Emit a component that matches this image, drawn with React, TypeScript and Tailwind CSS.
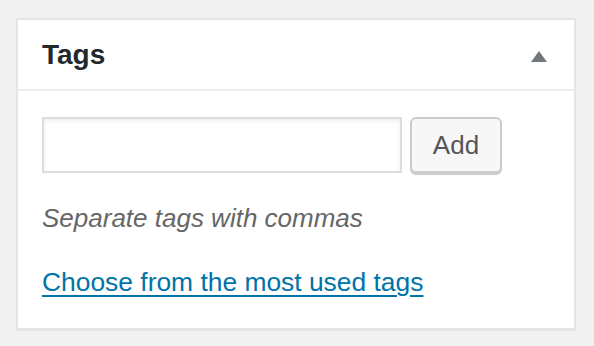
import React from 'react';

const font = { fontFamily: '"Liberation Sans", Arial, sans-serif' };

const TagsBox: React.FC = () => {
    return (
        <div className="bg-white border-2 border-[#e5e5e5] w-[560px] shadow-[0_1px_1px_rgba(0,0,0,0.04)]">
            <div className="h-[71px] flex items-center justify-between pl-6 pr-[27px] border-b-2 border-[#eeeeee]">
                <h2 className="text-[28px] leading-none font-bold text-[#23282d]">Tags</h2>
                <svg width="16" height="11" viewBox="0 0 16 11" className="mt-[3px]">
                    <polygon points="8,0 16,11 0,11" fill="#72777c" />
                </svg>
            </div>
            <div className="px-6 pt-[26px] pb-[28px]">
                <div className="flex items-start gap-2">
                    <input
                        type="text"
                        className="w-[360px] h-[56px] border-2 border-[#dddddd] shadow-[inset_0_2px_4px_rgba(0,0,0,0.07)] outline-none px-3 text-[26px]"
                    />
                    <button className="w-[92px] h-[56px] rounded-[6px] border-2 border-[#cccccc] bg-[#f7f7f7] shadow-[0_2px_0_#cccccc] text-[26px] text-[#555555]">
                        Add
                    </button>
                </div>
                <p className="mt-[27px] text-[26px] leading-[36px] italic text-[#666666]">Separate tags with commas</p>
                <p className="mt-[28px] text-[26.4px] leading-[36px]">
                    <a href="#" className="text-[#0073aa] underline underline-offset-[4px] decoration-[2px]">
                        Choose from the most used tags
                    </a>
                </p>
            </div>
        </div>
    );
};

export default function App() {
    return (
        <div className="min-h-screen bg-[#f1f1f1] pt-[18px] pl-4" style={font}>
            <TagsBox />
        </div>
    );
}
